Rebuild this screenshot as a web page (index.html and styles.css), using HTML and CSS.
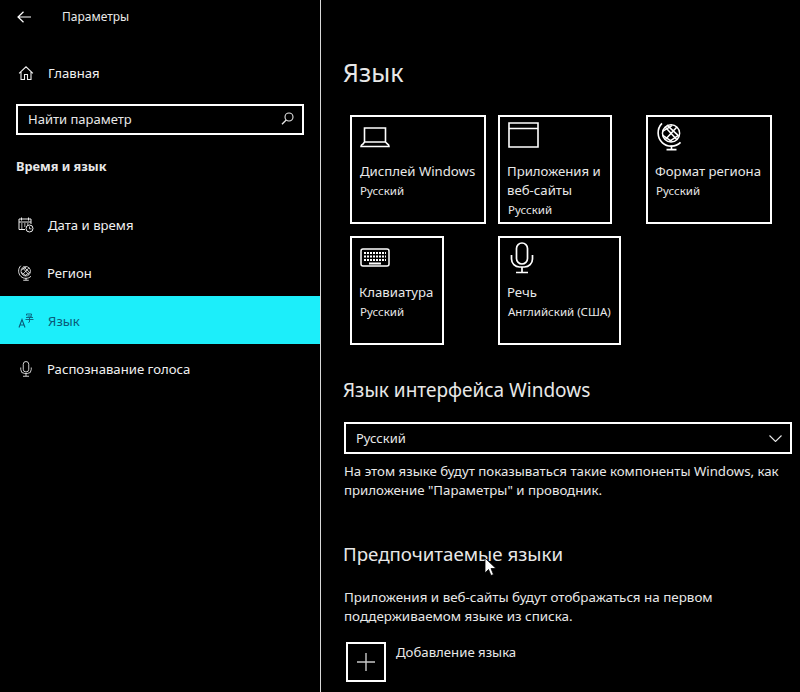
FILE: index.html
```html
<!DOCTYPE html>
<html lang="ru">
<head>
<meta charset="utf-8">
<title>Параметры</title>
<link rel="stylesheet" href="styles.css">
</head>
<body>
<svg class="defs" width="0" height="0" aria-hidden="true">
  <defs>
    <symbol id="globe" viewBox="0 0 32 32">
      <g fill="none" stroke="currentColor">
        <circle cx="15.500" cy="12.500" r="9.500" stroke-width="1.600"/>
        <path d="M9 5.500l13 14M22 5.500l-13 14M6.500 10l10-6M24 14.500l-9 6M11 3.500l12 11M6 14.500l10 7" stroke-width="1.700"/>
        <path d="M5.500 1.500C-.5 7.500 0 17.500 6 23c5.500 5 14.500 5 20 -.5" stroke-width="1.800"/>
        <path d="M16 26v4M10.500 30.500h11" stroke-width="1.800"/>
      </g>
    </symbol>
    <symbol id="mic" viewBox="0 0 24 32">
      <g fill="none" stroke="currentColor" stroke-width="1.700">
        <rect x="6.500" y="1" width="11" height="21" rx="5.500"/>
        <path d="M1.500 13v4a8 8 0 0 0 8 8h5a8 8 0 0 0 8-8v-4M12 25v5M6 30.500h12"/>
      </g>
    </symbol>
  </defs>
</svg>
<div class="app">
  <aside class="side">
    <header class="side-head">
      <svg class="back" width="14" height="12" viewBox="0 0 14 12"><path d="M6.500.7L1 6l5.500 5.300M1 6h13" fill="none" stroke="currentColor" stroke-width="1.200"/></svg>
      <span class="app-title">Параметры</span>
    </header>
    <a class="nav home">
      <svg class="nav-icon" width="15" height="14" viewBox="0 0 15 14"><path d="M.6 7.300L7.500.8l6.900 6.500M2.500 6v7.500h3.500V8.500h3v5h3.500V6" fill="none" stroke="currentColor" stroke-width="1.100"/></svg>
      <span>Главная</span>
    </a>
    <div class="search">
      <span>Найти параметр</span>
      <svg width="13" height="13" viewBox="0 0 13 13"><circle cx="8" cy="5" r="4" fill="none" stroke="currentColor" stroke-width="1.100"/><path d="M5.200 8L1 12.300" stroke="currentColor" stroke-width="1.300"/></svg>
    </div>
    <h2 class="side-group">Время и язык</h2>
    <nav class="nav-list">
      <a class="nav">
        <svg class="nav-icon" width="16" height="16" viewBox="0 0 16 16"><g fill="none" stroke="currentColor"><path d="M7 12.500H1V2h12v5M1 5h12M3.500.5v3M10.500.5v3"/><circle cx="11.500" cy="11.500" r="3.500"/><path d="M11.500 9.500v2.300h2" stroke-width=".8"/><path d="M3 7h1.500M6 7h1.500M9 7h1.500M3 9h1.500M6 9h1.500M3 11h1.500" stroke-width="1.200"/></g></svg>
        <span>Дата и время</span>
      </a>
      <a class="nav">
        <svg class="nav-icon region-icon" width="16" height="16"><use href="#globe"/></svg>
        <span>Регион</span>
      </a>
      <a class="nav current">
        <svg class="nav-icon" width="16" height="15" viewBox="0 0 16 15"><g fill="none" stroke="currentColor"><path d="M1 14.500L4 6.500l3 8M2 12h4" stroke-width="1.100"/><path d="M8.500 2.500V1h5v1.500M8 4.500h7M9.500 3h4l-2 2v4l-1.200.5M7.500 6.500h8" stroke-width=".9"/></g></svg>
        <span>Язык</span>
      </a>
      <a class="nav">
        <svg class="nav-icon voice-icon" width="12" height="16"><use href="#mic"/></svg>
        <span>Распознавание голоса</span>
      </a>
    </nav>
  </aside>

  <main class="main">
    <h1 class="page-title">Язык</h1>

    <div class="tiles">
      <div class="tile-row">
        <article class="tile t-display">
          <svg class="tile-icon laptop" width="31" height="24" viewBox="0 0 31 24"><path d="M4.500 16V2h21v14M1 20.500c0-1 1-2 2-2.500l1.500-2h21l2 2c1 .5 1.500 1.500 1.500 2.500z" fill="none" stroke="currentColor" stroke-width="1.600"/></svg>
          <h3>Дисплей Windows</h3>
          <p>Русский</p>
        </article>
        <article class="tile t-apps">
          <svg class="tile-icon window" width="31" height="27" viewBox="0 0 31 27"><path d="M1 1h29v24H1zM1 6.500h29" fill="none" stroke="currentColor" stroke-width="1.600"/></svg>
          <h3 class="nudge">Приложения и<br>веб-сайты</h3>
          <p>Русский</p>
        </article>
        <article class="tile t-format">
          <svg class="tile-icon globe-lg" width="29" height="29"><use href="#globe"/></svg>
          <h3 class="nudge">Формат региона</h3>
          <p>Русский</p>
        </article>
      </div>
      <div class="tile-row">
        <article class="tile t-keys">
          <svg class="tile-icon keyboard" width="30" height="22" viewBox="0 0 30 22"><rect x="1" y="2" width="28" height="17" rx="2" fill="none" stroke="currentColor" stroke-width="1.500"/><path d="M4 6h22M4 9.500h22M4 13h22" stroke="currentColor" stroke-width="2" stroke-dasharray="2 1"/><path d="M9 16.500h12" stroke="currentColor" stroke-width="2"/></svg>
          <h3 class="nudge">Клавиатура</h3>
          <p>Русский</p>
        </article>
        <article class="tile t-speech">
          <svg class="tile-icon mic-lg" width="24" height="32"><use href="#mic"/></svg>
          <h3 class="nudge">Речь</h3>
          <p>Английский (США)</p>
        </article>
      </div>
    </div>

    <h2 class="section-title ui-lang">Язык интерфейса Windows</h2>
    <div class="select">
      <span>Русский</span>
      <svg width="13" height="7" viewBox="0 0 13 7"><path d="M.5.500l6 6 6-6" fill="none" stroke="currentColor" stroke-width="1.100"/></svg>
    </div>
    <p class="body-text">На этом языке будут показываться такие компоненты Windows, как<br>приложение "Параметры" и проводник.</p>

    <h2 class="section-title pref-lang">Предпочитаемые языки</h2>
    <p class="body-text pref-text">Приложения и веб-сайты будут отображаться на первом<br>поддерживаемом языке из списка.</p>
    <div class="add-row">
      <span class="add-box"><svg width="18" height="18" viewBox="0 0 18 18"><path d="M9 0v18M0 9h18" stroke="#c8c8c8" stroke-width="1.400"/></svg></span>
      <span class="add-label">Добавление языка</span>
    </div>
    <svg class="cursor" width="14" height="20" viewBox="0 0 14 20"><path d="M1 1v15l3.500-3.500 2.500 6 2.500-1-2.500-6H12z" fill="#fff" stroke="#000" stroke-width=".8"/></svg>
  </main>
</div>
</body>
</html>
```
FILE: styles.css
```css
* { box-sizing: border-box; }
html, body { margin: 0; height: 100%; background: #000; overflow: hidden; }
body { color: #fff; font-family: "Noto Sans", "Open Sans", sans-serif; font-size: 13px; }
.defs { position: absolute; }
h1, h2, h3, p { margin: 0; font-weight: 400; }

.app { display: flex; width: 800px; height: 692px; }

.side { width: 321px; flex: none; border-right: 1px solid #d8d8d8; }
.side-head { display: flex; align-items: center; height: 33px; padding-left: 17px; }
.back { margin-right: 31px; }
.app-title { font-size: 12px; color: #e8e8e8; }

.nav { display: flex; align-items: center; height: 48px; padding: 1px 0 0 18px; color: #f0f0f0; font-size: 13.150px; }
.nav-icon { width: 16px; margin-right: 14px; flex: none; }
.home { margin-top: 15px; }
.region-icon { margin-right: 13px; }
.voice-icon { margin-right: 13px; }

.search { display: flex; align-items: center; justify-content: space-between; width: 288px; height: 31px; margin: 8px 0 0 16px; padding: 0 8px 2px 10px; border: 2px solid #fff; color: #e8e8e8; }
.side-group { margin: 21px 0 0 16px; font-size: 12.750px; line-height: 20px; font-weight: 700; color: #e8e8e8; }
.nav-list { margin-top: 24px; }
.current { background: #1ceefa; color: #0a5a78; }

.main { position: relative; flex: 1; padding-left: 22px; }
.page-title { margin-top: 53px; font-size: 25px; line-height: 38px; color: #e8e8e8; }

.tiles { display: flex; flex-direction: column; gap: 12px; margin: 24px 0 0 7px; }
.tile-row { display: flex; gap: 12px; }
.tile { height: 109px; padding: 5px 0 0 8px; border: 2px solid #fff; }
.tile h3 { font-size: 13.200px; line-height: 19px; color: #e8e8e8; }
.tile .nudge { margin-left: -1px; }
.tile p { font-size: 11.500px; line-height: 19px; color: #e8e8e8; }
.tile-icon { display: block; }
.laptop { margin-top: 4px; margin-bottom: 12px; }
.window { margin-bottom: 13px; }
.globe-lg { margin: 0 0 11px 1px; }
.keyboard { margin-top: 4px; margin-bottom: 14px; }
.mic-lg { margin: -1px 0 9px 2px; }
.t-display { width: 136px; }
.t-apps { width: 114px; }
.t-format { width: 126px; margin-left: 22px; }
.t-keys { width: 94px; margin-right: 42px; }
.t-speech { width: 123px; }

.section-title { font-size: 19px; line-height: 26px; color: #e8e8e8; }
.pref-lang { font-size: 18.700px; }
.ui-lang { margin-top: 32px; }
.select { display: flex; align-items: center; justify-content: space-between; width: 448px; height: 32px; margin: 19px 0 0 1px; padding: 0 8px 0 10px; border: 2px solid #fff; color: #e8e8e8; font-size: 13px; }
.body-text { margin: 8px 0 0 1px; font-size: 13.250px; line-height: 19px; color: #e8e8e8; }
.pref-lang { margin-top: 41px; }
.pref-text { margin-top: 21px; font-size: 13.400px; line-height: 18.600px; }

.add-row { display: flex; align-items: flex-start; margin: 17px 0 0 3px; }
.add-box { display: flex; align-items: center; justify-content: center; width: 40px; height: 40px; margin-right: 10px; border: 2px solid #fff; }
.add-label { font-size: 13.200px; line-height: 20px; color: #e8e8e8; }

.cursor { position: absolute; left: 163px; top: 557px; }
```
